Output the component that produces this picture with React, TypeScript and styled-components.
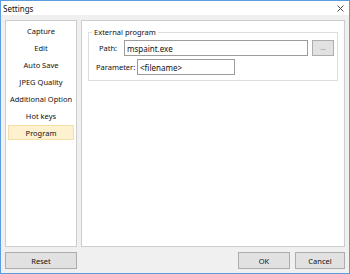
import React from 'react'
import styled, { createGlobalStyle } from 'styled-components'

const GlobalStyle = createGlobalStyle`
  html, body {
    margin: 0;
    padding: 0;
    background: #ffffff;
  }
  * {
    box-sizing: border-box;
  }
`

const SECTIONS = ["Capture", "Edit", "Auto Save", "JPEG Quality", "Additional Option", "Hot keys", "Program"];

const FONT = `"Noto Sans", "Open Sans", "Liberation Sans", sans-serif`;

const Window = styled.div`
  width: 350px;
  height: 274px;
  border: 1px solid #5c9de0;
  display: flex;
  flex-direction: column;
  font-family: ${FONT};
  font-size: 7.5px;
  color: #111;
  background: #f0f0f0;
`

const TitleBar = styled.div`
  height: 14px;
  background: #ffffff;
  display: flex;
  align-items: center;
  justify-content: space-between;
  padding: 0 5px 0 2px;
  font-size: 8px;
`

const CloseIcon = () => (
  <svg width="7" height="7" viewBox="0 0 7 7">
    <path d="M0.5 0.5 L6.5 6.5 M6.5 0.5 L0.5 6.5" stroke="#444" strokeWidth="1" />
  </svg>
)

const Body = styled.div`
  flex: 1;
  display: flex;
  flex-direction: column;
  gap: 5px;
  padding: 5px 4px 4px 4px;
`

const Main = styled.div`
  flex: 1;
  display: flex;
  gap: 4px;
`

const Panel = styled.div<{ $width?: number }>`
  background: #ffffff;
  border: 1px solid #cdcdcd;
  ${(p) => p.$width ? `width: ${p.$width}px;` : 'flex: 1;'}
`

const List = styled.div`
  display: flex;
  flex-direction: column;
  gap: 2px;
  padding: 2px 1px 0 1px;
`

const ListItem = styled.div<{ $active?: boolean }>`
  height: 15px;
  display: flex;
  align-items: center;
  justify-content: center;
  white-space: nowrap;
  margin: 0 1px;
  background: ${(p) => p.$active ? '#fdf1d0' : 'transparent'};
  border: 1px solid ${(p) => p.$active ? '#f6dfa6' : 'transparent'};
`

const Group = styled.fieldset`
  margin: 6px 6px 0 6px;
  padding: 3px 3px 5px 0;
  border: 1px solid #dedede;
  display: flex;
  flex-direction: column;
  gap: 3px;
  min-width: 0;
`

const Legend = styled.legend`
  padding: 0 2px;
  margin-left: 3px;
  line-height: 10px;
`

const Row = styled.div<{ $indent: number; $labelWidth: number }>`
  display: flex;
  align-items: center;
  padding-left: ${(p) => p.$indent}px;

  > label {
    width: ${(p) => p.$labelWidth}px;
    flex-shrink: 0;
  }
`

const TextBox = styled.div<{ $width?: number }>`
  height: 16px;
  border: 1px solid #9c9c9c;
  background: #fff;
  display: flex;
  align-items: center;
  padding: 0 2px;
  font-size: 8px;
  ${(p) => p.$width ? `width: ${p.$width}px;` : 'flex: 1;'}
`

const Button = styled.div<{ $width: number; $height?: number }>`
  width: ${(p) => p.$width}px;
  height: ${(p) => p.$height ?? 17}px;
  background: #e1e1e1;
  border: 1px solid #adadad;
  display: flex;
  align-items: center;
  justify-content: center;
  flex-shrink: 0;
`

const BrowseButton = styled(Button)`
  margin-left: 4px;
  font-size: 6px;
  color: #555;
`

const Footer = styled.div`
  display: flex;
  align-items: center;
  gap: 5px;
`

const Spacer = styled.div`
  flex: 1;
`

export default function App() {
  return (
    <>
      <GlobalStyle />
      <Window>
        <TitleBar>
          <span>Settings</span>
          <CloseIcon />
        </TitleBar>
        <Body>
          <Main>
            <Panel $width={72}>
              <List>
                {SECTIONS.map((s) => (
                  <ListItem key={s} $active={s === "Program"}>{s}</ListItem>
                ))}
              </List>
            </Panel>
            <Panel>
              <Group>
                <Legend>External program</Legend>
                <Row $indent={10} $labelWidth={25}>
                  <label>Path:</label>
                  <TextBox>mspaint.exe</TextBox>
                  <BrowseButton $width={22} $height={16}>...</BrowseButton>
                </Row>
                <Row $indent={7} $labelWidth={41}>
                  <label>Parameter:</label>
                  <TextBox $width={98}>&lt;filename&gt;</TextBox>
                </Row>
              </Group>
            </Panel>
          </Main>
          <Footer>
            <Button $width={72}>Reset</Button>
            <Spacer />
            <Button $width={52}>OK</Button>
            <Button $width={50}>Cancel</Button>
          </Footer>
        </Body>
      </Window>
    </>
  )
}
